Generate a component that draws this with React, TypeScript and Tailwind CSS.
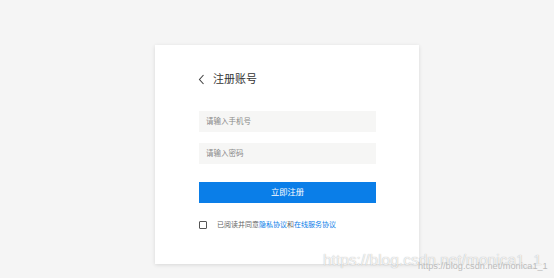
import React from "react";

export default function App() {
  return (
    <div
      className="relative w-[554px] h-[278px] overflow-hidden bg-[#f5f5f5]"
      style={{ fontFamily: '"Liberation Sans", "Noto Sans CJK SC", sans-serif' }}
    >
      <div className="ml-[155px] pt-[45px]">
        <div className="w-[264px] h-[219px] bg-white shadow-[0_1px_4px_rgba(0,0,0,0.12)] pl-[44px] pt-[26px]">
          <div className="flex items-center h-[16px]">
            <svg width="7" height="11" viewBox="0 0 7 11" className="ml-[-1px]">
              <path d="M5.5 1 L1.5 5.5 L5.5 10" fill="none" stroke="#444" strokeWidth="1.1" />
            </svg>
            <span className="ml-[8px] text-[11px] leading-[16px] text-[#333]">注册账号</span>
          </div>
          <div className="mt-[24px] w-[177px] h-[21px] bg-[#f6f6f5] flex items-center pl-[7px] text-[7.5px] text-[#888]">
            请输入手机号
          </div>
          <div className="mt-[11px] w-[177px] h-[21px] bg-[#f6f6f5] flex items-center pl-[7px] text-[7.5px] text-[#888]">
            请输入密码
          </div>
          <div className="mt-[18px] w-[177px] h-[21px] bg-[#0a7ee8] flex items-center justify-center text-[8.3px] text-white">
            立即注册
          </div>
          <div className="mt-[17px] flex items-center h-[10px]">
            <div className="w-[8px] h-[8px] border border-[#555] rounded-[1px]" />
            <span className="ml-[10px] text-[7px] leading-[10px] text-[#666]">
              已阅读并同意<span className="text-[#0a7ee8]">隐私协议</span>和<span className="text-[#0a7ee8]">在线服务协议</span>
            </span>
          </div>
        </div>
      </div>
      <div className="absolute left-[323px] top-[251px] text-[15.5px] leading-[18px] text-white/80 [text-shadow:0_0_1px_rgba(0,0,0,0.35)] whitespace-nowrap">
        https://blog.csdn.net/monica1_1
      </div>
      <div className="absolute left-[418px] top-[261px] text-[9.2px] leading-[10px] text-[#bbb] whitespace-nowrap">
        https://blog.csdn.net/monica1_1
      </div>
    </div>
  );
}
